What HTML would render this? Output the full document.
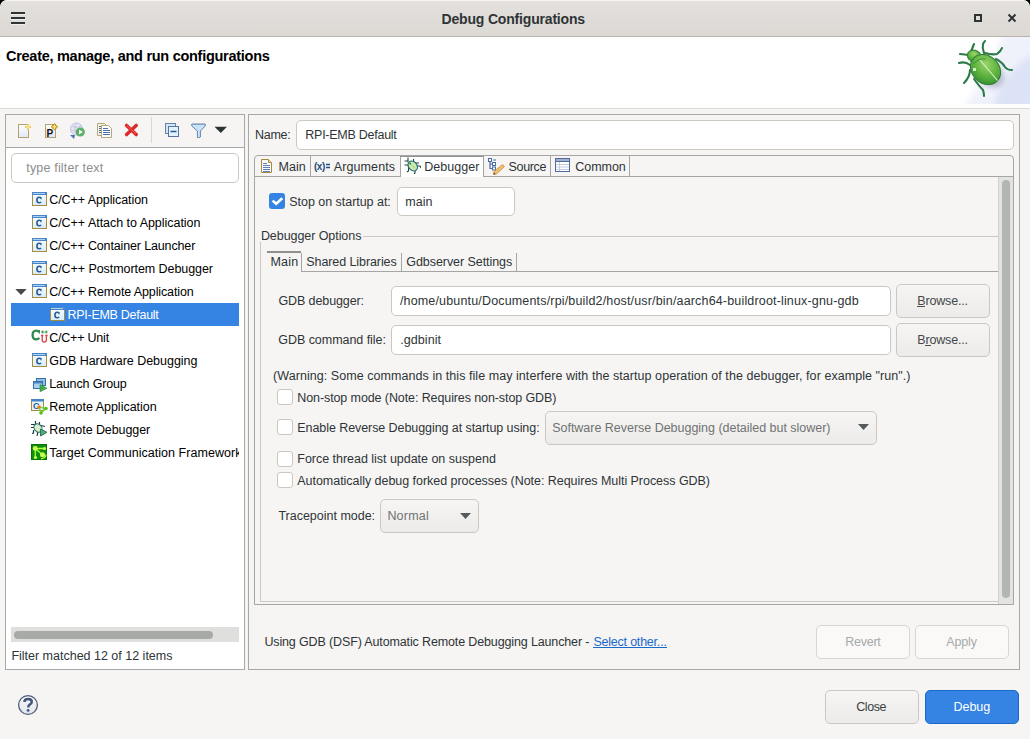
<!DOCTYPE html>
<html><head><meta charset="utf-8"><style>
html,body{margin:0;padding:0;}
body{width:1030px;height:739px;position:relative;overflow:hidden;background:#000;font-family:"Liberation Sans",sans-serif;}
#win{position:absolute;left:0;top:0;width:1030px;height:739px;background:#f6f5f4;border-radius:7px 7px 0 0;overflow:hidden;}
.t{position:absolute;white-space:nowrap;}
</style></head><body><div id="win">
<div style="position:absolute;left:0px;top:0px;width:1030px;height:36px;background:linear-gradient(#e3e0dd,#dcd9d5);border-radius:7px 7px 0 0;box-shadow:inset 0 1px rgba(255,255,255,0.7);"></div>
<div style="position:absolute;left:0px;top:36px;width:1030px;height:1px;background:#bab4ae;"></div>
<div style="position:absolute;left:11px;top:12px;width:14px;height:2px;background:#2e3436;"></div>
<div style="position:absolute;left:11px;top:14px;width:14px;height:1px;background:rgba(255,255,255,0.55);"></div>
<div style="position:absolute;left:11px;top:17px;width:14px;height:2px;background:#2e3436;"></div>
<div style="position:absolute;left:11px;top:19px;width:14px;height:1px;background:rgba(255,255,255,0.55);"></div>
<div style="position:absolute;left:11px;top:22px;width:14px;height:2px;background:#2e3436;"></div>
<div style="position:absolute;left:11px;top:24px;width:14px;height:1px;background:rgba(255,255,255,0.55);"></div>
<div class="t" style="left:441.60px;top:12.00px;font-size:14px;line-height:14px;color:#2e3436;letter-spacing:-0.184px;font-weight:bold;">Debug Configurations</div>
<div style="position:absolute;left:974px;top:14px;width:8px;height:8px;box-sizing:border-box;border:2px solid #2e3436;"></div>
<svg style="position:absolute;left:1007px;top:13px" width="10" height="10" viewBox="0 0 10 10"><path d="M1.5 1.5 L8.5 8.5 M8.5 1.5 L1.5 8.5" stroke="#2e3436" stroke-width="2"/></svg>
<div style="position:absolute;left:0px;top:37px;width:1030px;height:71px;background:#ffffff;"></div>
<div style="position:absolute;left:0px;top:108px;width:1030px;height:1px;background:#dcdad7;"></div>
<div class="t" style="left:6.00px;top:49.00px;font-size:14.5px;line-height:14.5px;color:#000000;letter-spacing:-0.274px;font-weight:bold;">Create, manage, and run configurations</div>
<svg style="position:absolute;left:940px;top:37px" width="90" height="67" viewBox="0 0 90 67"><defs><radialGradient id="body" cx="0.4" cy="0.35" r="0.75"><stop offset="0" stop-color="#9ad468"/><stop offset="0.55" stop-color="#5cb23e"/><stop offset="1" stop-color="#2f8c2c"/></radialGradient><filter id="sh" x="-50%" y="-50%" width="200%" height="200%"><feGaussianBlur stdDeviation="2.5"/></filter><filter id="bl" x="-20%" y="-20%" width="140%" height="140%"><feGaussianBlur stdDeviation="3"/></filter></defs><g filter="url(#bl)"><path d="M64 -5 Q48 40 22 72 L95 72 L95 -5 Z" fill="#f0f2fb"/><path d="M95 16 Q64 32 52 72 L95 72 Z" fill="#dde3f6"/></g><ellipse cx="50" cy="37" rx="16" ry="12" transform="rotate(42 50 37)" fill="#8088a0" opacity="0.45" filter="url(#sh)"/><g stroke="#2b7a48" stroke-width="2.1" fill="none" stroke-linecap="round" stroke-linejoin="round"><path d="M30 17 L34 7"/><path d="M29 18 L20 17"/><path d="M44 16 Q42 11 43 7 Q44 5 45 4"/><path d="M45 16 Q52 18 57 17 Q61 14 62 11"/><path d="M56 22 Q62 25 65 30 Q67 33 72 33"/><path d="M30 28 Q25 24 19 26"/><path d="M30 33 Q30 40 24 46"/><path d="M34 42 Q39 49 43 53 Q44 56 44 59"/></g><ellipse cx="34.5" cy="19.5" rx="7.5" ry="6" transform="rotate(30 34.5 19.5)" fill="url(#body)" stroke="#2f7a3a" stroke-width="1"/><ellipse cx="45.5" cy="32.5" rx="16.5" ry="13.5" transform="rotate(45 45.5 32.5)" fill="url(#body)" stroke="#2f7a3a" stroke-width="1"/><path d="M40 23 L57.5 43.5" stroke="#e0f4d0" stroke-width="1.1"/><path d="M33 27 Q39 21 46 22" stroke="#3c8a36" stroke-width="0.9" fill="none"/><rect x="33" y="31" width="3" height="3" fill="#eaf8e0" opacity="0.85"/><rect x="28" y="23" width="2" height="3" fill="#eaf8e0" opacity="0.75"/></svg>
<div style="position:absolute;left:5px;top:114px;width:240px;height:556px;box-sizing:border-box;border:1px solid #a8a8a8;background:#ffffff;"></div>
<div style="position:absolute;left:6px;top:115px;width:238px;height:32px;background:#f6f5f4;"></div>
<div style="position:absolute;left:6px;top:147px;width:238px;height:1px;background:#a8a8a8;"></div>
<div style="position:absolute;left:11px;top:153px;width:228px;height:30px;box-sizing:border-box;border:1px solid #cdc7c2;border-radius:5px;background:#fff;"></div>
<div class="t" style="left:26.30px;top:162.00px;font-size:12.5px;line-height:12.5px;color:#8b8e8f;letter-spacing:0.170px;">type filter text</div>
<div style="position:absolute;left:11px;top:303px;width:228px;height:23px;background:#3584e4;"></div>
<div class="t" style="left:49.20px;top:194.00px;font-size:12.5px;line-height:12.5px;color:#000000;letter-spacing:-0.078px;">C/C++ Application</div>
<div class="t" style="left:49.20px;top:217.00px;font-size:12.5px;line-height:12.5px;color:#000000;letter-spacing:-0.035px;">C/C++ Attach to Application</div>
<div class="t" style="left:49.20px;top:240.00px;font-size:12.5px;line-height:12.5px;color:#000000;letter-spacing:-0.143px;">C/C++ Container Launcher</div>
<div class="t" style="left:49.20px;top:263.00px;font-size:12.5px;line-height:12.5px;color:#000000;letter-spacing:-0.065px;">C/C++ Postmortem Debugger</div>
<div class="t" style="left:49.20px;top:286.00px;font-size:12.5px;line-height:12.5px;color:#000000;letter-spacing:-0.122px;">C/C++ Remote Application</div>
<div class="t" style="left:67.50px;top:309.00px;font-size:12.5px;line-height:12.5px;color:#ffffff;letter-spacing:-0.275px;">RPI-EMB Default</div>
<div class="t" style="left:49.20px;top:332.00px;font-size:12.5px;line-height:12.5px;color:#000000;letter-spacing:-0.206px;">C/C++ Unit</div>
<div class="t" style="left:49.20px;top:355.00px;font-size:12.5px;line-height:12.5px;color:#000000;letter-spacing:-0.019px;">GDB Hardware Debugging</div>
<div class="t" style="left:49.20px;top:378.00px;font-size:12.5px;line-height:12.5px;color:#000000;letter-spacing:-0.145px;">Launch Group</div>
<div class="t" style="left:49.20px;top:401.00px;font-size:12.5px;line-height:12.5px;color:#000000;letter-spacing:-0.012px;">Remote Application</div>
<div class="t" style="left:49.20px;top:424.00px;font-size:12.5px;line-height:12.5px;color:#000000;letter-spacing:-0.075px;">Remote Debugger</div>
<div class="t" style="left:49.20px;top:447.00px;font-size:12.5px;line-height:12.5px;color:#000000;letter-spacing:0.041px;width:190px;overflow:hidden;white-space:nowrap;">Target Communication Framework</div>
<div style="position:absolute;left:11px;top:627px;width:228px;height:15px;background:#dfdfde;"></div>
<div style="position:absolute;left:14px;top:631px;width:199px;height:8px;background:#a8aaa8;border-radius:4px;"></div>
<div class="t" style="left:11.40px;top:650.00px;font-size:12.5px;line-height:12.5px;color:#2e3436;letter-spacing:-0.004px;">Filter matched 12 of 12 items</div>
<div style="position:absolute;left:248px;top:114px;width:772px;height:556px;box-sizing:border-box;border:1px solid #a8a8a8;"></div>
<div class="t" style="left:254.90px;top:129.00px;font-size:12.5px;line-height:12.5px;color:#2e3436;letter-spacing:-0.225px;">Name:</div>
<div style="position:absolute;left:296px;top:120px;width:718px;height:30px;box-sizing:border-box;border:1px solid #cdc7c2;border-radius:5px;background:#fff;"></div>
<div class="t" style="left:305.30px;top:129.00px;font-size:12.5px;line-height:12.5px;color:#2e3436;letter-spacing:-0.261px;">RPI-EMB Default</div>
<div style="position:absolute;left:254px;top:155px;width:760px;height:450px;box-sizing:border-box;border:1px solid #a5a5a5;border-radius:4px 4px 0 0;"></div>
<div style="position:absolute;left:255px;top:176px;width:758px;height:1px;background:#a5a5a5;"></div>
<div style="position:absolute;left:310px;top:156px;width:1px;height:20px;background:#a5a5a5;"></div>
<div style="position:absolute;left:400px;top:156px;width:1px;height:20px;background:#a5a5a5;"></div>
<div style="position:absolute;left:483px;top:156px;width:1px;height:20px;background:#a5a5a5;"></div>
<div style="position:absolute;left:550px;top:156px;width:1px;height:20px;background:#a5a5a5;"></div>
<div style="position:absolute;left:629px;top:156px;width:1px;height:20px;background:#a5a5a5;"></div>
<div style="position:absolute;left:401px;top:157px;width:82px;height:20px;background:#ffffff;"></div>
<div style="position:absolute;left:400px;top:156px;width:84px;height:1px;background:#8f9393;"></div>
<div class="t" style="left:278.60px;top:161.00px;font-size:12.5px;line-height:12.5px;color:#2e3436;letter-spacing:0.033px;">Main</div>
<div class="t" style="left:333.70px;top:161.00px;font-size:12.5px;line-height:12.5px;color:#2e3436;letter-spacing:0.119px;">Arguments</div>
<div class="t" style="left:424.30px;top:161.00px;font-size:12.5px;line-height:12.5px;color:#2e3436;letter-spacing:0.029px;">Debugger</div>
<div class="t" style="left:508.50px;top:161.00px;font-size:12.5px;line-height:12.5px;color:#2e3436;letter-spacing:-0.320px;">Source</div>
<div class="t" style="left:575.20px;top:161.00px;font-size:12.5px;line-height:12.5px;color:#2e3436;letter-spacing:-0.020px;">Common</div>
<div style="position:absolute;left:269px;top:193px;width:16px;height:16px;background:#3584e4;border-radius:3px;"></div>
<svg style="position:absolute;left:269px;top:193px" width="16" height="16" viewBox="0 0 16 16"><path d="M3.6 7.6 L7.2 10.8 L13.3 5.2" stroke="#fff" stroke-width="2.6" fill="none"/></svg>
<div class="t" style="left:289.30px;top:196.00px;font-size:12.5px;line-height:12.5px;color:#2e3436;letter-spacing:-0.036px;">Stop on startup at:</div>
<div style="position:absolute;left:397px;top:187px;width:118px;height:29px;box-sizing:border-box;border:1px solid #cdc7c2;border-radius:5px;background:#fff;"></div>
<div class="t" style="left:405.30px;top:196.00px;font-size:12.5px;line-height:12.5px;color:#2e3436;letter-spacing:0.033px;">main</div>
<div class="t" style="left:260.90px;top:230.00px;font-size:12.5px;line-height:12.5px;color:#2e3436;letter-spacing:-0.063px;">Debugger Options</div>
<div style="position:absolute;left:363px;top:236px;width:635px;height:1px;background:#cdc7c2;"></div>
<div style="position:absolute;left:260px;top:242px;width:1px;height:360px;background:#cdc7c2;"></div>
<div style="position:absolute;left:260px;top:601px;width:738px;height:1px;background:#cdc7c2;"></div>
<div style="position:absolute;left:267px;top:251px;width:34px;height:2px;background:#8f8f8f;"></div>
<div style="position:absolute;left:301px;top:253px;width:1px;height:18px;background:#a5a5a5;"></div>
<div style="position:absolute;left:401px;top:253px;width:1px;height:18px;background:#a5a5a5;"></div>
<div style="position:absolute;left:516px;top:253px;width:1px;height:18px;background:#a5a5a5;"></div>
<div style="position:absolute;left:301px;top:271px;width:697px;height:1px;background:#a5a5a5;"></div>
<div class="t" style="left:270.40px;top:256.00px;font-size:12.5px;line-height:12.5px;color:#2e3436;letter-spacing:0.200px;">Main</div>
<div class="t" style="left:306.30px;top:256.00px;font-size:12.5px;line-height:12.5px;color:#2e3436;letter-spacing:-0.087px;">Shared Libraries</div>
<div class="t" style="left:406.30px;top:256.00px;font-size:12.5px;line-height:12.5px;color:#2e3436;letter-spacing:-0.065px;">Gdbserver Settings</div>
<div class="t" style="left:278.50px;top:295.00px;font-size:12.5px;line-height:12.5px;color:#2e3436;letter-spacing:-0.112px;">GDB debugger:</div>
<div style="position:absolute;left:391px;top:286px;width:500px;height:30px;box-sizing:border-box;border:1px solid #cdc7c2;border-radius:5px;background:#fff;"></div>
<div class="t" style="left:399.90px;top:295.00px;font-size:12.5px;line-height:12.5px;color:#2e3436;letter-spacing:0.165px;">/home/ubuntu/Documents/rpi/build2/host/usr/bin/aarch64-buildroot-linux-gnu-gdb</div>
<div style="position:absolute;left:896px;top:284px;width:94px;height:34px;box-sizing:border-box;border:1px solid #cdc7c2;border-radius:5px;background:linear-gradient(#f6f5f4,#edebe9);"></div>
<div class="t" style="left:917.30px;top:295.00px;font-size:12.5px;line-height:12.5px;color:#43484a;letter-spacing:-0.175px;">Browse...</div>
<div style="position:absolute;left:917px;top:306px;width:8px;height:1px;background:#4a4e50;"></div>
<div class="t" style="left:278.30px;top:334.00px;font-size:12.5px;line-height:12.5px;color:#2e3436;letter-spacing:-0.047px;">GDB command file:</div>
<div style="position:absolute;left:391px;top:325px;width:500px;height:30px;box-sizing:border-box;border:1px solid #cdc7c2;border-radius:5px;background:#fff;"></div>
<div class="t" style="left:400.30px;top:334.00px;font-size:12.5px;line-height:12.5px;color:#2e3436;letter-spacing:0.057px;">.gdbinit</div>
<div style="position:absolute;left:896px;top:323px;width:94px;height:34px;box-sizing:border-box;border:1px solid #cdc7c2;border-radius:5px;background:linear-gradient(#f6f5f4,#edebe9);"></div>
<div class="t" style="left:917.30px;top:334.00px;font-size:12.5px;line-height:12.5px;color:#43484a;letter-spacing:-0.175px;">Browse...</div>
<div style="position:absolute;left:925px;top:345px;width:6px;height:1px;background:#4a4e50;"></div>
<div class="t" style="left:273.10px;top:370.00px;font-size:12.5px;line-height:12.5px;color:#2e3436;letter-spacing:0.057px;">(Warning: Some commands in this file may interfere with the startup operation of the debugger, for example "run".)</div>
<div style="position:absolute;left:277px;top:389px;width:16px;height:16px;box-sizing:border-box;border:1px solid #cdc7c2;border-radius:3px;background:#fff;"></div>
<div class="t" style="left:297.30px;top:392.00px;font-size:12.5px;line-height:12.5px;color:#2e3436;letter-spacing:-0.100px;">Non-stop mode (Note: Requires non-stop GDB)</div>
<div style="position:absolute;left:277px;top:419px;width:16px;height:16px;box-sizing:border-box;border:1px solid #cdc7c2;border-radius:3px;background:#fff;"></div>
<div class="t" style="left:297.30px;top:422.00px;font-size:12.5px;line-height:12.5px;color:#2e3436;letter-spacing:-0.073px;">Enable Reverse Debugging at startup using:</div>
<div style="position:absolute;left:545px;top:411px;width:332px;height:34px;box-sizing:border-box;border:1px solid #cdc7c2;border-radius:5px;background:linear-gradient(#f6f5f4,#edebe9);"></div>
<div class="t" style="left:552.20px;top:422.00px;font-size:12.5px;line-height:12.5px;color:#6f7372;letter-spacing:-0.021px;">Software Reverse Debugging (detailed but slower)</div>
<svg style="position:absolute;left:858px;top:424px" width="12" height="7" viewBox="0 0 12 7"><path d="M0 0 L11 0 L5.5 6 Z" fill="#555a5c"/></svg>
<div style="position:absolute;left:277px;top:451px;width:16px;height:16px;box-sizing:border-box;border:1px solid #cdc7c2;border-radius:3px;background:#fff;"></div>
<div class="t" style="left:297.30px;top:453.00px;font-size:12.5px;line-height:12.5px;color:#2e3436;letter-spacing:-0.026px;">Force thread list update on suspend</div>
<div style="position:absolute;left:277px;top:472px;width:16px;height:16px;box-sizing:border-box;border:1px solid #cdc7c2;border-radius:3px;background:#fff;"></div>
<div class="t" style="left:297.30px;top:475.00px;font-size:12.5px;line-height:12.5px;color:#2e3436;letter-spacing:-0.039px;">Automatically debug forked processes (Note: Requires Multi Process GDB)</div>
<div class="t" style="left:278.40px;top:510.00px;font-size:12.5px;line-height:12.5px;color:#2e3436;letter-spacing:-0.007px;">Tracepoint mode:</div>
<div style="position:absolute;left:380px;top:499px;width:99px;height:34px;box-sizing:border-box;border:1px solid #cdc7c2;border-radius:5px;background:linear-gradient(#f6f5f4,#edebe9);"></div>
<div class="t" style="left:387.40px;top:510.00px;font-size:12.5px;line-height:12.5px;color:#6f7372;letter-spacing:0.200px;">Normal</div>
<svg style="position:absolute;left:460px;top:513px" width="12" height="7" viewBox="0 0 12 7"><path d="M0 0 L11 0 L5.5 6 Z" fill="#555a5c"/></svg>
<div style="position:absolute;left:998px;top:177px;width:15px;height:427px;background:#e3e3e2;border-left:1px solid #d5d0cc;box-sizing:border-box;"></div>
<div style="position:absolute;left:1002px;top:180px;width:8px;height:418px;background:#b3b5b3;border-radius:4px;"></div>
<div class="t" style="left:264.40px;top:636.00px;font-size:12.5px;line-height:12.5px;color:#2e3436;letter-spacing:-0.135px;">Using GDB (DSF) Automatic Remote Debugging Launcher -</div>
<div class="t" style="left:593.40px;top:636.00px;font-size:12.5px;line-height:12.5px;color:#1b6acb;letter-spacing:-0.211px;">Select other...</div>
<div style="position:absolute;left:593px;top:647px;width:74px;height:1px;background:#1b6acb;"></div>
<div style="position:absolute;left:816px;top:625px;width:94px;height:34px;box-sizing:border-box;border:1px solid #d9d5d1;border-radius:5px;background:#faf9f8;"></div>
<div class="t" style="left:845.30px;top:636.00px;font-size:12.5px;line-height:12.5px;color:#a6a9a9;letter-spacing:-0.260px;">Revert</div>
<div style="position:absolute;left:915px;top:625px;width:94px;height:34px;box-sizing:border-box;border:1px solid #d9d5d1;border-radius:5px;background:#faf9f8;"></div>
<div class="t" style="left:946.30px;top:636.00px;font-size:12.5px;line-height:12.5px;color:#a6a9a9;letter-spacing:-0.162px;">Apply</div>
<svg style="position:absolute;left:32px;top:192px" width="15" height="14" viewBox="0 0 15 14"><defs><linearGradient id="cg32192" x1="0" y1="0" x2="0" y2="1"><stop offset="0" stop-color="#f4fbff"/><stop offset="1" stop-color="#d6ecf8"/></linearGradient></defs><rect x="0.5" y="2.5" width="14" height="11" fill="url(#cg32192)" stroke="#a88c3c"/><rect x="0" y="0" width="15" height="3" fill="#4a84c6"/><rect x="1" y="1" width="12" height="1" fill="#a9d3f2"/><path d="M8.9 6.3 C8.6 5.6 8 5.3 7.2 5.3 C5.9 5.3 4.9 6.3 4.9 8.1 C4.9 9.9 5.9 10.8 7.2 10.8 C8 10.8 8.6 10.5 9 9.8" fill="none" stroke="#2a5a98" stroke-width="1.6"/><path d="M9 5 v2.2" stroke="#2a5a98" stroke-width="1.1"/></svg>
<svg style="position:absolute;left:32px;top:215px" width="15" height="14" viewBox="0 0 15 14"><defs><linearGradient id="cg32215" x1="0" y1="0" x2="0" y2="1"><stop offset="0" stop-color="#f4fbff"/><stop offset="1" stop-color="#d6ecf8"/></linearGradient></defs><rect x="0.5" y="2.5" width="14" height="11" fill="url(#cg32215)" stroke="#a88c3c"/><rect x="0" y="0" width="15" height="3" fill="#4a84c6"/><rect x="1" y="1" width="12" height="1" fill="#a9d3f2"/><path d="M8.9 6.3 C8.6 5.6 8 5.3 7.2 5.3 C5.9 5.3 4.9 6.3 4.9 8.1 C4.9 9.9 5.9 10.8 7.2 10.8 C8 10.8 8.6 10.5 9 9.8" fill="none" stroke="#2a5a98" stroke-width="1.6"/><path d="M9 5 v2.2" stroke="#2a5a98" stroke-width="1.1"/></svg>
<svg style="position:absolute;left:32px;top:238px" width="15" height="14" viewBox="0 0 15 14"><defs><linearGradient id="cg32238" x1="0" y1="0" x2="0" y2="1"><stop offset="0" stop-color="#f4fbff"/><stop offset="1" stop-color="#d6ecf8"/></linearGradient></defs><rect x="0.5" y="2.5" width="14" height="11" fill="url(#cg32238)" stroke="#a88c3c"/><rect x="0" y="0" width="15" height="3" fill="#4a84c6"/><rect x="1" y="1" width="12" height="1" fill="#a9d3f2"/><path d="M8.9 6.3 C8.6 5.6 8 5.3 7.2 5.3 C5.9 5.3 4.9 6.3 4.9 8.1 C4.9 9.9 5.9 10.8 7.2 10.8 C8 10.8 8.6 10.5 9 9.8" fill="none" stroke="#2a5a98" stroke-width="1.6"/><path d="M9 5 v2.2" stroke="#2a5a98" stroke-width="1.1"/></svg>
<svg style="position:absolute;left:32px;top:261px" width="15" height="14" viewBox="0 0 15 14"><defs><linearGradient id="cg32261" x1="0" y1="0" x2="0" y2="1"><stop offset="0" stop-color="#f4fbff"/><stop offset="1" stop-color="#d6ecf8"/></linearGradient></defs><rect x="0.5" y="2.5" width="14" height="11" fill="url(#cg32261)" stroke="#a88c3c"/><rect x="0" y="0" width="15" height="3" fill="#4a84c6"/><rect x="1" y="1" width="12" height="1" fill="#a9d3f2"/><path d="M8.9 6.3 C8.6 5.6 8 5.3 7.2 5.3 C5.9 5.3 4.9 6.3 4.9 8.1 C4.9 9.9 5.9 10.8 7.2 10.8 C8 10.8 8.6 10.5 9 9.8" fill="none" stroke="#2a5a98" stroke-width="1.6"/><path d="M9 5 v2.2" stroke="#2a5a98" stroke-width="1.1"/></svg>
<svg style="position:absolute;left:32px;top:284px" width="15" height="14" viewBox="0 0 15 14"><defs><linearGradient id="cg32284" x1="0" y1="0" x2="0" y2="1"><stop offset="0" stop-color="#f4fbff"/><stop offset="1" stop-color="#d6ecf8"/></linearGradient></defs><rect x="0.5" y="2.5" width="14" height="11" fill="url(#cg32284)" stroke="#a88c3c"/><rect x="0" y="0" width="15" height="3" fill="#4a84c6"/><rect x="1" y="1" width="12" height="1" fill="#a9d3f2"/><path d="M8.9 6.3 C8.6 5.6 8 5.3 7.2 5.3 C5.9 5.3 4.9 6.3 4.9 8.1 C4.9 9.9 5.9 10.8 7.2 10.8 C8 10.8 8.6 10.5 9 9.8" fill="none" stroke="#2a5a98" stroke-width="1.6"/><path d="M9 5 v2.2" stroke="#2a5a98" stroke-width="1.1"/></svg>
<svg style="position:absolute;left:50px;top:307px" width="15" height="14" viewBox="0 0 15 14"><defs><linearGradient id="cg50307" x1="0" y1="0" x2="0" y2="1"><stop offset="0" stop-color="#f4fbff"/><stop offset="1" stop-color="#d6ecf8"/></linearGradient></defs><rect x="0.5" y="2.5" width="14" height="11" fill="url(#cg50307)" stroke="#a88c3c"/><rect x="0" y="0" width="15" height="3" fill="#4a84c6"/><rect x="1" y="1" width="12" height="1" fill="#a9d3f2"/><path d="M8.9 6.3 C8.6 5.6 8 5.3 7.2 5.3 C5.9 5.3 4.9 6.3 4.9 8.1 C4.9 9.9 5.9 10.8 7.2 10.8 C8 10.8 8.6 10.5 9 9.8" fill="none" stroke="#2a5a98" stroke-width="1.6"/><path d="M9 5 v2.2" stroke="#2a5a98" stroke-width="1.1"/></svg>
<svg style="position:absolute;left:32px;top:353px" width="15" height="14" viewBox="0 0 15 14"><defs><linearGradient id="cg32353" x1="0" y1="0" x2="0" y2="1"><stop offset="0" stop-color="#f4fbff"/><stop offset="1" stop-color="#d6ecf8"/></linearGradient></defs><rect x="0.5" y="2.5" width="14" height="11" fill="url(#cg32353)" stroke="#a88c3c"/><rect x="0" y="0" width="15" height="3" fill="#4a84c6"/><rect x="1" y="1" width="12" height="1" fill="#a9d3f2"/><path d="M8.9 6.3 C8.6 5.6 8 5.3 7.2 5.3 C5.9 5.3 4.9 6.3 4.9 8.1 C4.9 9.9 5.9 10.8 7.2 10.8 C8 10.8 8.6 10.5 9 9.8" fill="none" stroke="#2a5a98" stroke-width="1.6"/><path d="M9 5 v2.2" stroke="#2a5a98" stroke-width="1.1"/></svg>
<svg style="position:absolute;left:15px;top:289px" width="12" height="7" viewBox="0 0 12 7"><path d="M0.3 0 L11.7 0 L6 6 Z" fill="#4a4a4a"/></svg>
<svg style="position:absolute;left:31px;top:329px" width="17" height="15" viewBox="0 0 17 15"><path d="M8.2 3.2 Q7.2 1.6 5.2 1.6 Q1.6 1.6 1.6 6 Q1.6 10.4 5.2 10.4 Q7.2 10.4 8.3 8.8" fill="none" stroke="#2f8a4e" stroke-width="2.3"/><path d="M8.4 1 v3.5" stroke="#2f8a4e" stroke-width="1.2"/><path d="M10 3 h3.2 M11.6 1.4 v3.2 M13.6 3 h3.2 M15.2 1.4 v3.2" stroke="#3a9a58" stroke-width="1.1"/><path d="M11.2 6.5 v4.3 Q11.2 13.2 13.3 13.2 Q15.4 13.2 15.4 10.8 V6.5 M10 6.5 h2.4 M14.3 6.5 h2.3" fill="none" stroke="#d8404c" stroke-width="1.3"/></svg>
<svg style="position:absolute;left:33px;top:378px" width="15" height="14" viewBox="0 0 15 14"><rect x="3.5" y="0.5" width="9" height="7" fill="#8fc0e6" stroke="#3a6fa8"/><rect x="0.5" y="3.5" width="9" height="7" fill="#a9d2f0" stroke="#3a6fa8"/><rect x="1" y="4" width="8" height="1.5" fill="#4a84c6"/><path d="M7 6.5 L14 10.2 L7 13.8 Z" fill="#3fae4a" stroke="#2a8a36" stroke-width="0.6"/></svg>
<svg style="position:absolute;left:31px;top:399px" width="17" height="16" viewBox="0 0 17 16"><rect x="0.5" y="1.5" width="12" height="10" fill="#e6f4fc" stroke="#a88c3c"/><rect x="0" y="0" width="13" height="2.5" fill="#4a84c6"/><text x="2" y="10" font-family="Liberation Sans" font-weight="bold" font-size="9" fill="#2f5e9c">C</text><path d="M8 8 L15 9.5 M8 8 L10 14 M15 9.5 L10 14" stroke="#7ad838" stroke-width="1.4"/><circle cx="8" cy="8" r="1.8" fill="#e87a2a"/><circle cx="15" cy="9.5" r="1.8" fill="#56c020"/><circle cx="10" cy="14" r="1.8" fill="#56c020"/></svg>
<svg style="position:absolute;left:30px;top:420px" width="18" height="17" viewBox="0 0 18 17"><path d="M5.5 1 V5.5 M1 4.5 H6 M9.5 2 V5 M11 5.5 L15 6.5 M1 7.5 H4 M3.5 10 V13 L2 13.5 M7.5 12 V15 L6.5 15.5" stroke="#1e3f3a" stroke-width="1.2" fill="none"/><ellipse cx="8" cy="8" rx="3.6" ry="4.6" transform="rotate(-40 8 8)" fill="#dcefc4" stroke="#2a7080" stroke-width="1.1"/><path d="M10.5 9 L17 12.3 L10.5 16 Z" fill="#62a866" stroke="#1f7a6a" stroke-width="1"/></svg>
<svg style="position:absolute;left:31px;top:444px" width="16" height="16" viewBox="0 0 16 16"><rect x="0" y="0" width="16" height="16" fill="#0f8f0f"/><rect x="0.5" y="0.5" width="15" height="15" fill="none" stroke="#067006"/><path d="M4.2 4.4 L11.5 10.8 M4.3 4.5 V13.5 M4.5 4.5 H14.5 M15 10.5 Q14.8 14.2 10 14.8" stroke="#b0ff30" stroke-width="1.3" fill="none"/><circle cx="4.2" cy="4.4" r="2.4" fill="#c8ff50"/><circle cx="11.5" cy="10.8" r="2.5" fill="#c8ff50"/><circle cx="4.5" cy="13.5" r="1.6" fill="#c8ff50"/><circle cx="13.5" cy="4.5" r="1.6" fill="#c8ff50"/></svg>
<svg style="position:absolute;left:17px;top:123px" width="16" height="16" viewBox="0 0 16 16"><defs><linearGradient id="pg" x1="0" y1="0" x2="0" y2="1"><stop offset="0" stop-color="#ffffff"/><stop offset="1" stop-color="#dfe8f6"/></linearGradient></defs><rect x="1.5" y="1.5" width="10" height="13" fill="url(#pg)" stroke="#b3a170"/><path d="M11 1 v6 M8 4 h6" stroke="#e8c448" stroke-width="2.2"/><path d="M11 1.5 v5 M8.5 4 h5" stroke="#fff6c0" stroke-width="0.8"/></svg>
<svg style="position:absolute;left:44px;top:123px" width="16" height="16" viewBox="0 0 16 16"><rect x="1.5" y="1.5" width="10" height="13" fill="url(#pg)" stroke="#b3a170"/><text x="2.5" y="13.5" font-family="Liberation Sans" font-weight="bold" font-size="10" fill="#111">P</text><path d="M10.5 0.5 L13.8 3.8 L10.5 7.1 L7.2 3.8 Z" fill="#d6a418" stroke="#b07c10" stroke-width="0.6"/><path d="M10.5 1.8 v4 M8.5 3.8 h4" stroke="#fff3b0" stroke-width="0.9"/></svg>
<svg style="position:absolute;left:69px;top:122px" width="17" height="17" viewBox="0 0 17 17"><circle cx="7.5" cy="7" r="6" fill="#e4e8f4" stroke="#b8c4e0" stroke-width="1"/><path d="M3 4 Q7 7 12 4 M2 8 Q7 11 13 8 M7.5 1 Q4 7 7.5 13" stroke="#c8b8dc" stroke-width="0.8" fill="none"/><circle cx="11.3" cy="10" r="4.6" fill="#5bb06a"/><path d="M10 7.6 L13.8 10 L10 12.4 Z" fill="#ffffff"/><path d="M1 13 L6 13 L5 17 Z" fill="#4f74b8"/></svg>
<svg style="position:absolute;left:96px;top:122px" width="17" height="17" viewBox="0 0 17 17"><path d="M1.5 1.5 h7 l2 2 v10 h-9 z" fill="#f4f2e8" stroke="#b8a878"/><path d="M5.5 3.5 h7 l3 3 v9 h-10 z" fill="#ffffff" stroke="#b8a878"/><path d="M3 4.5 h2 M3 6.5 h2 M3 8.5 h2 M3 10.5 h2 M7 6.5 h5 M7 8.5 h7 M7 10.5 h7 M7 12.5 h7" stroke="#4a70b0" stroke-width="1"/></svg>
<svg style="position:absolute;left:124px;top:123px" width="15" height="14" viewBox="0 0 15 14"><path d="M2.6 2.4 L12.2 11.6 M12.2 2.4 L2.6 11.6" stroke="#dc2a2a" stroke-width="3.4" stroke-linecap="round"/><path d="M3 2.5 L12 11" stroke="#f06060" stroke-width="1"/></svg>
<div style="position:absolute;left:151px;top:117px;width:1px;height:26px;background:#d8d8d8;"></div>
<svg style="position:absolute;left:165px;top:123px" width="15" height="15" viewBox="0 0 15 15"><rect x="0.5" y="0.5" width="10" height="10" fill="#cfe8f8" stroke="#6a82aa"/><rect x="3.5" y="3.5" width="10" height="10" fill="#e0f2fc" stroke="#5a72a0"/><path d="M5.5 8.5 h6" stroke="#2a5a9c" stroke-width="1.6"/></svg>
<svg style="position:absolute;left:191px;top:123px" width="15" height="15" viewBox="0 0 15 15"><path d="M0.8 1 h13.4 v2 l-4.8 5 v6 l-3 1.5 v-7.5 l-5.6 -5 z" fill="#c8e4f8" stroke="#6a82aa" stroke-width="1"/><path d="M1.5 1.5 h12" stroke="#8aa0c8"/></svg>
<svg style="position:absolute;left:214px;top:126px" width="14" height="8" viewBox="0 0 14 8"><path d="M0.5 0.8 L13 0.8 L6.8 7 Z" fill="#2e3436"/></svg>
<svg style="position:absolute;left:260px;top:158px" width="13" height="16" viewBox="0 0 13 16"><path d="M1.5 1.5 h7 l3 3 v10 h-10 z" fill="#fbfbff" stroke="#a8883a"/><path d="M8.5 1.5 v3 h3" fill="#f0e0a0" stroke="#a8883a"/><path d="M3 5.5 h4 M3 7.5 h7 M3 9.5 h7 M3 11.5 h7 M3 13.5 h7" stroke="#5c7cb8" stroke-width="1"/></svg>
<svg style="position:absolute;left:314px;top:160px" width="17" height="12" viewBox="0 0 17 12"><text x="0" y="9.5" font-family="Liberation Sans" font-weight="bold" font-size="10" fill="#274a7a" letter-spacing="-0.5">(x)</text><path d="M12 4.5 h4 M12 7.5 h4" stroke="#274a7a" stroke-width="1.3"/></svg>
<svg style="position:absolute;left:404px;top:157px" width="17" height="17" viewBox="0 0 17 17"><path d="M4 0.5 v5 M0.5 4 h4 M9.5 2 v3 M10 5 L12 6 h3 M0.5 8 h3 L5 10 M4.5 10 v4 L3 15 M11 13 v3 L10 17 M13 9 h3 L17 11" stroke="#1e4a3a" stroke-width="1.1" fill="none"/><ellipse cx="8.8" cy="9" rx="4.2" ry="5.4" transform="rotate(-40 8.8 9)" fill="#cfe8b0" stroke="#1f6f80" stroke-width="1.1"/><path d="M6 6.5 L12 12" stroke="#6ab060" stroke-width="0.8" stroke-dasharray="1 1"/><circle cx="6.2" cy="6.5" r="1" fill="#3a8a30"/></svg>
<svg style="position:absolute;left:488px;top:158px" width="17" height="17" viewBox="0 0 17 17"><path d="M2 2 v9 M2 6 h3 M2 10.5 h3" stroke="#4a6aa8" stroke-width="1.2" fill="none"/><rect x="0.5" y="0.5" width="3" height="3" fill="#fff" stroke="#4a6aa8"/><rect x="4.5" y="4.5" width="3" height="3" fill="#fff" stroke="#4a6aa8"/><rect x="4.5" y="9" width="3" height="3" fill="#fff" stroke="#4a6aa8"/><path d="M5 2 h3" stroke="#4a6aa8"/><path d="M14.5 6.5 L16.5 8.5 L8.5 16 L5.5 16.5 L6 13.5 Z" fill="#f0c070" stroke="#c88a3a" stroke-width="0.8"/><path d="M5.6 16.4 L6 14.5 L7.5 16 Z" fill="#5a3a20"/></svg>
<svg style="position:absolute;left:555px;top:158px" width="16" height="15" viewBox="0 0 16 15"><rect x="0.5" y="0.5" width="14" height="13" fill="#ffffff" stroke="#4e6a9e"/><rect x="0.5" y="0.5" width="14" height="3" fill="#9fb0d0" stroke="#4e6a9e"/><path d="M1 6.5 h13 M1 9 h13 M1 11.5 h13 M4.5 4 v9" stroke="#c0cadc" stroke-width="0.9"/></svg>
<div style="position:absolute;left:825px;top:690px;width:94px;height:34px;box-sizing:border-box;border:1px solid #cdc7c2;border-radius:5px;background:linear-gradient(#f6f5f4,#edebe9);"></div>
<div class="t" style="left:856.30px;top:701.00px;font-size:12.5px;line-height:12.5px;color:#3a3f41;letter-spacing:-0.462px;">Close</div>
<div style="position:absolute;left:925px;top:690px;width:94px;height:34px;box-sizing:border-box;border:1px solid #1b6acb;border-radius:5px;background:#3584e4;"></div>
<div class="t" style="left:953.40px;top:701.00px;font-size:12.5px;line-height:12.5px;color:#ffffff;letter-spacing:0.012px;">Debug</div>
<svg style="position:absolute;left:17px;top:694px" width="22" height="22" viewBox="0 0 22 22"><defs><linearGradient id="hg" x1="0" y1="0" x2="0" y2="1"><stop offset="0" stop-color="#f8f8fa"/><stop offset="1" stop-color="#e4e5ea"/></linearGradient></defs><circle cx="11" cy="11" r="9.4" fill="url(#hg)" stroke="#4d5d7a" stroke-width="1.3"/><path d="M7.4 8 Q7.4 4.9 11.1 4.9 Q14.8 4.9 14.8 7.7 Q14.8 9.6 12.7 10.6 Q11.3 11.3 11.3 13.4" stroke="#43577a" stroke-width="2.5" fill="none"/><circle cx="11.1" cy="16.4" r="1.4" fill="#43577a"/></svg>
</div></body></html>
